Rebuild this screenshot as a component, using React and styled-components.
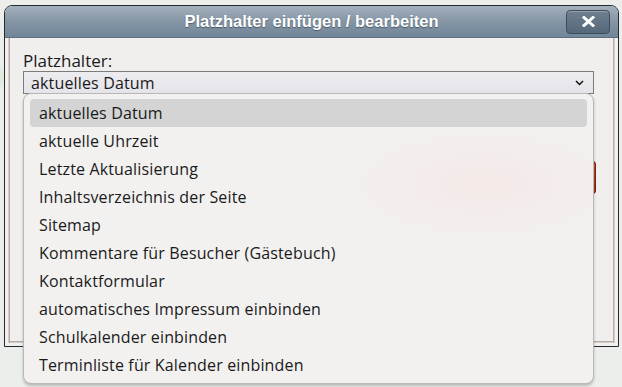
import styled, { createGlobalStyle } from 'styled-components'

const GlobalStyle = createGlobalStyle`
  html, body {
    margin: 0;
    padding: 0;
    background: #eceeec;
    overflow: hidden;
  }
`

const options = [
  'aktuelles Datum',
  'aktuelle Uhrzeit',
  'Letzte Aktualisierung',
  'Inhaltsverzeichnis der Seite',
  'Sitemap',
  'Kommentare für Besucher (Gästebuch)',
  'Kontaktformular',
  'automatisches Impressum einbinden',
  'Schulkalender einbinden',
  'Terminliste für Kalender einbinden',
]

const Page = styled.div`
  width: 622px;
  height: 387px;
  box-sizing: border-box;
  padding: 5px 0 0 4px;
  background: radial-gradient(ellipse at 0% 20%, #dfe8da 0, transparent 30px), #eceeec;
`

const Dialog = styled.div`
  width: 615px;
  height: 342px;
  box-sizing: border-box;
  border: 1px solid #262a2e;
  border-radius: 8px 8px 0 0;
  display: flex;
  flex-direction: column;
  background: #f0efee;
`

const TitleBar = styled.div`
  height: 31px;
  flex: none;
  display: grid;
  grid-template-columns: 1fr auto 1fr;
  align-items: center;
  border-radius: 7px 7px 0 0;
  background: linear-gradient(#a3b1bd, #8595a4 50%, #71869a);
  border-bottom: 1px solid #5d6e7e;
`

const Title = styled.div`
  grid-column: 2;
  font: bold 16.5px 'Liberation Sans', Arial, sans-serif;
  color: #ffffff;
  text-shadow: 0 1px 1px rgba(40, 55, 70, 0.6);
`

const CloseButton = styled.button`
  grid-column: 3;
  justify-self: end;
  margin-right: 8px;
  width: 44px;
  height: 24px;
  padding: 0;
  display: flex;
  align-items: center;
  justify-content: center;
  border: 1px solid #3e4c58;
  border-radius: 4px;
  background: linear-gradient(#6f8090, #55677a);
  box-shadow: inset 0 1px 0 rgba(255, 255, 255, 0.25);
`

const Body = styled.div`
  flex: 1;
  position: relative;
  margin: 0 0 1px 0;
  border-left: 3px solid #f3f1f0;
  border-right: 3px solid #f3f1f0;
  border-bottom: 2px solid #f3f1f0;
  box-shadow: inset 1px 0 0 #d6ccc6, inset 2px 0 0 #b9aca4, inset -1px 0 0 #d6ccc6,
    inset -2px 0 0 #b9aca4, inset 0 -1px 0 #d6ccc6, inset 0 -2px 0 #b9aca4;
  padding: 13px 21px 0 15px;
  font-family: 'Open Sans', 'Noto Sans', sans-serif;
  color: #1a1a1a;
`

const Label = styled.div`
  font-size: 17px;
  line-height: 20px;
`

const Field = styled.div`
  position: relative;
`

const Select = styled.div`
  height: 23px;
  box-sizing: border-box;
  border: 1px solid #7c7c7c;
  background: linear-gradient(#ececf0, #e4e4ea);
  display: flex;
  align-items: center;
  justify-content: space-between;
  padding: 0 9px 0 7px;
  font-size: 16px;
  letter-spacing: 0.15px;
`

const ButtonRow = styled.div`
  display: flex;
  justify-content: flex-end;
  margin: 67px -2px 0 0;
`

const RedButton = styled.button`
  width: 110px;
  height: 33px;
  border: 1px solid #7a2410;
  border-radius: 3px;
  background: linear-gradient(#c8502c, #a3321a);
  color: #fff;
  font: bold 14px 'Liberation Sans', Arial, sans-serif;
`

const Popup = styled.div`
  position: absolute;
  top: 22px;
  left: 0;
  width: 571px;
  height: 291px;
  box-sizing: border-box;
  padding: 5px 6px;
  border: 1px solid #b8b8b8;
  border-radius: 8px;
  background: radial-gradient(ellipse 170px 70px at 460px 90px, rgba(244, 230, 228, 0.7), transparent),
    #f2f1f0;
  box-shadow: 0 2px 3px rgba(0, 0, 0, 0.22);
  z-index: 2;
`

const Option = styled.div`
  height: 28px;
  display: flex;
  align-items: center;
  padding-left: 9px;
  border-radius: 4px;
  font-size: 16px;
  letter-spacing: 0.15px;
  color: #1a1a1a;
  background: ${p => (p.$active ? '#d4d4d4' : 'transparent')};
`

export default function App() {
  return (
    <Page>
      <GlobalStyle />
      <Dialog>
        <TitleBar>
          <Title>Platzhalter einfügen / bearbeiten</Title>
          <CloseButton aria-label="Schließen">
            <svg width="13" height="11" viewBox="0 0 13 11">
              <path d="M2 1.5 L11 9.5 M11 1.5 L2 9.5" stroke="#fff" strokeWidth="3" strokeLinecap="square" />
            </svg>
          </CloseButton>
        </TitleBar>
        <Body>
          <Label>Platzhalter:</Label>
          <Field>
            <Select>
              <span>aktuelles Datum</span>
              <svg width="9" height="6" viewBox="0 0 9 6">
                <path d="M1 1 L4.5 4.5 L8 1" stroke="#111" strokeWidth="1.5" fill="none" />
              </svg>
            </Select>
            <Popup>
              {options.map((o, i) => (
                <Option key={o} $active={i === 0}>{o}</Option>
              ))}
            </Popup>
            <ButtonRow>
              <RedButton>Einfügen</RedButton>
            </ButtonRow>
          </Field>
        </Body>
      </Dialog>
    </Page>
  )
}
